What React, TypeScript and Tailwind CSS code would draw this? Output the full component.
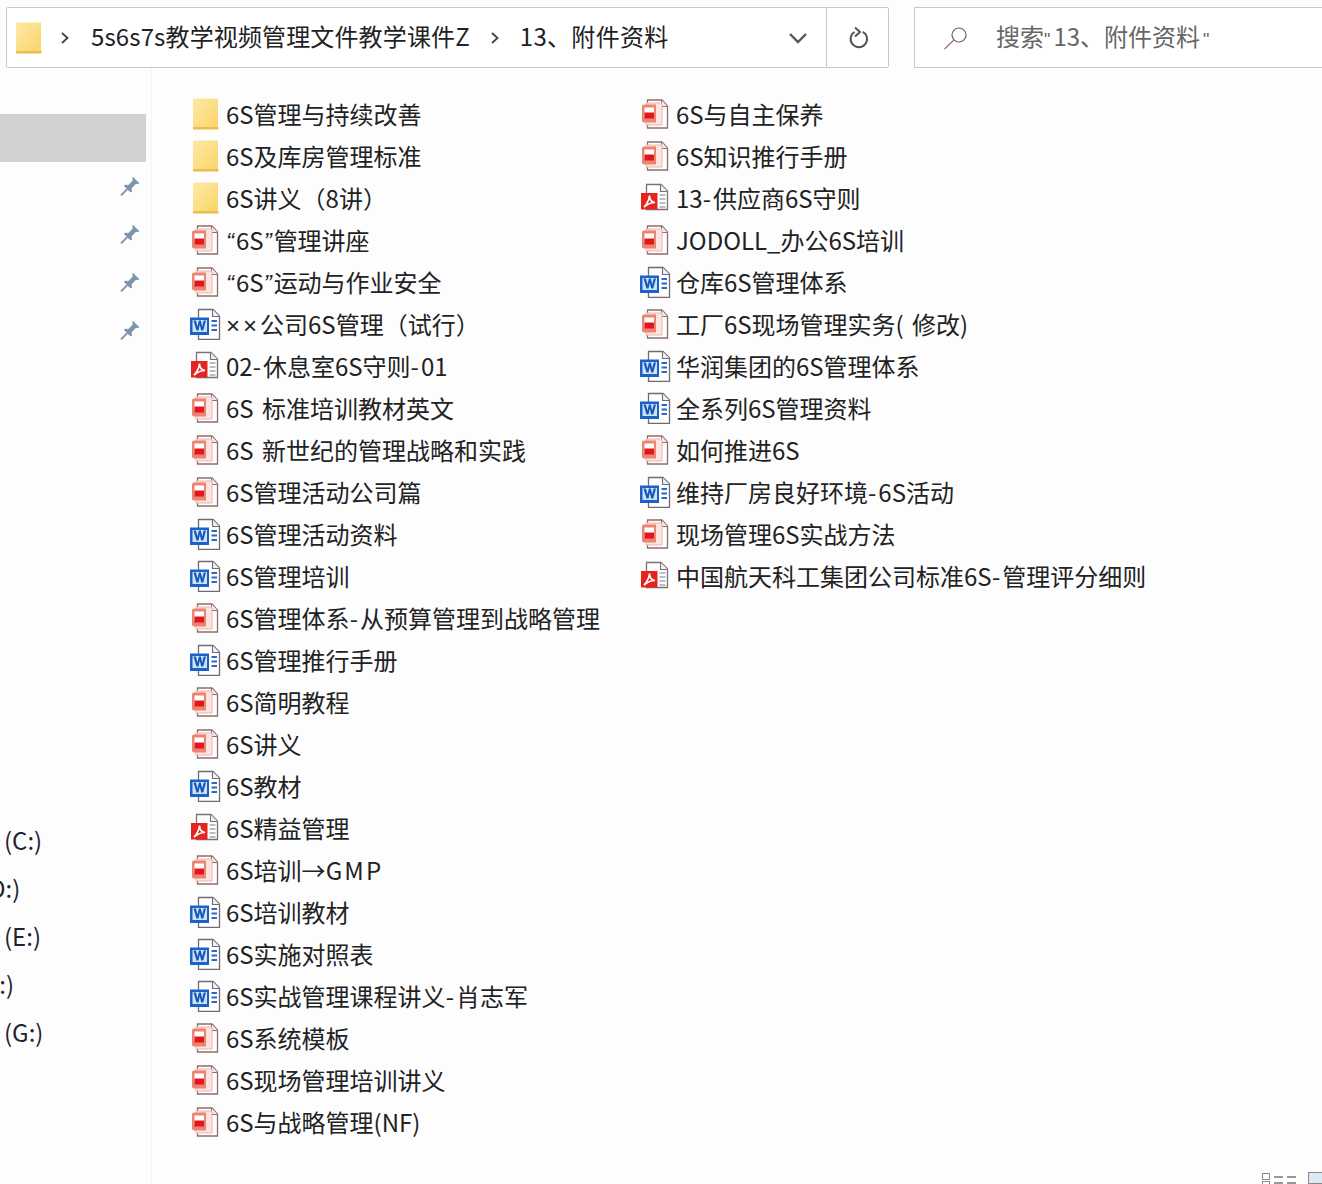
import * as React from "react";

type Kind = "folder" | "ppt" | "word" | "pdf";

const FONT = { fontFamily: '"Noto Sans CJK SC", "Noto Sans", sans-serif' };

const COL_1: [Kind, string][] = [
  ["folder", "6S管理与持续改善"],
  ["folder", "6S及库房管理标准"],
  ["folder", "6S讲义（8讲）"],
  ["ppt", "“6S”管理讲座"],
  ["ppt", "“6S”运动与作业安全"],
  ["word", "××公司6S管理（试行）"],
  ["pdf", "02-休息室6S守则-01"],
  ["ppt", "6S 标准培训教材英文"],
  ["ppt", "6S 新世纪的管理战略和实践"],
  ["ppt", "6S管理活动公司篇"],
  ["word", "6S管理活动资料"],
  ["word", "6S管理培训"],
  ["ppt", "6S管理体系-从预算管理到战略管理"],
  ["word", "6S管理推行手册"],
  ["ppt", "6S简明教程"],
  ["ppt", "6S讲义"],
  ["word", "6S教材"],
  ["pdf", "6S精益管理"],
  ["ppt", "6S培训→GMP"],
  ["word", "6S培训教材"],
  ["word", "6S实施对照表"],
  ["word", "6S实战管理课程讲义-肖志军"],
  ["ppt", "6S系统模板"],
  ["ppt", "6S现场管理培训讲义"],
  ["ppt", "6S与战略管理(NF)"],
];

const COL_2: [Kind, string][] = [
  ["ppt", "6S与自主保养"],
  ["ppt", "6S知识推行手册"],
  ["pdf", "13-供应商6S守则"],
  ["ppt", "JODOLL_办公6S培训"],
  ["word", "仓库6S管理体系"],
  ["ppt", "工厂6S现场管理实务( 修改)"],
  ["word", "华润集团的6S管理体系"],
  ["word", "全系列6S管理资料"],
  ["ppt", "如何推进6S"],
  ["word", "维持厂房良好环境-6S活动"],
  ["ppt", "现场管理6S实战方法"],
  ["pdf", "中国航天科工集团公司标准6S-管理评分细则"],
];

// Estos signos van más estrechos o más anchos que en la fuente CJK.
function renderName(name: string) {
  return name.split(/([“”×\-]|GMP)/).map((part, i) => {
    if (part === "“" || part === "”") {
      return (
        <span key={i} className="mr-[2px] font-['Liberation_Sans'] italic leading-[0]">
          {part}
        </span>
      );
    }
    if (part === "×") {
      return (
        <span key={i} className="mr-[3px] font-['Liberation_Sans'] leading-[0]">
          {part}
        </span>
      );
    }
    if (part === "-") {
      return (
        <span key={i} className="mr-[2px]">
          {part}
        </span>
      );
    }
    if (part === "GMP") {
      return (
        <span key={i} className="tracking-[2.2px]">
          {part}
        </span>
      );
    }
    return part;
  });
}

function FolderIcon() {
  return (
    <svg viewBox="0 0 26 32" className="h-8 w-[26px]">
      <defs>
        <linearGradient id="fold" x1="0" y1="0" x2="1" y2="1">
          <stop offset="0" stopColor="#fde9a6" />
          <stop offset="1" stopColor="#fbd468" />
        </linearGradient>
      </defs>
      <path d="M0 0.5H25V30.5H0Z" fill="url(#fold)" />
      <path d="M0 29H25.5V31.5H0Z" fill="#e9bd4e" />
    </svg>
  );
}

function PptIcon() {
  return (
    <svg viewBox="0 0 32 32" className="h-8 w-8">
      <path d="M8.5 2H23L28.5 8V30H8.5Z" fill="#fff" stroke="#8c6e6e" strokeWidth="1.3" />
      <path d="M22.5 2V8.5H28.5" fill="#f4ecec" stroke="#8c6e6e" strokeWidth="1.1" />
      <path d="M7 5H23V27H7Z" fill="#fbe3e0" stroke="#eeb3aa" strokeWidth="1" />
      <path d="M3 8.5Q3 6.5 5 6.5H17V24.5H5Q3 24.5 3 22.5Z" fill="#ec8472" />
      <path d="M5.5 9.5H15V19H5.5Z" fill="#fff" />
      <path d="M5.5 14.5H15V20.5H5.5Z" fill="#e2141c" />
    </svg>
  );
}

function WordIcon() {
  return (
    <svg viewBox="0 0 32 32" className="h-8 w-8">
      <path d="M9.5 1.5H24L30.5 8V31.5H9.5Z" fill="#fff" stroke="#6f6a78" strokeWidth="1.3" />
      <path d="M23.5 1.5V8.5H30.5" fill="#f1f1f4" stroke="#6f6a78" strokeWidth="1.1" />
      <path d="M22.5 13H28M22.5 17.5H28M22.5 22H28" stroke="#2a68c4" strokeWidth="1.8" />
      <path d="M1 9.5H20V27H1Z" fill="#1b62c8" />
      <path d="M3.5 12H18V24H3.5Z" fill="#cfe2f8" />
      <path d="M4.5 12.5L7.5 22.5H9.5L10.8 16.5L12.2 22.5H14.2L17 12.5H14.7L13.2 18.5L11.8 12.5H9.9L8.5 18.5L6.9 12.5Z" fill="#1557b8" />
    </svg>
  );
}

function PdfIcon() {
  return (
    <svg viewBox="0 0 32 32" className="h-8 w-8">
      <path d="M7.5 2.5H22L28.5 9V27.5H7.5Z" fill="#fff" stroke="#7d6f72" strokeWidth="1.3" />
      <path d="M21.5 2.5V9.5H28.5" fill="#f1f1f4" stroke="#7d6f72" strokeWidth="1.1" />
      <path d="M20.5 13H26.5M20.5 17H26.5M20.5 21H26.5M20.5 25H26.5" stroke="#a8a8ae" strokeWidth="1.4" />
      <path d="M2 11H18.5V27.5H2Z" fill="#e5231f" />
      <path d="M5 25C8 22 10 18 10.5 13.5C10.5 17 12.5 20 16 20.5C12.5 20.5 8.5 22 5 25Z" fill="none" stroke="#fff" strokeWidth="1.7" />
    </svg>
  );
}

function PinIcon() {
  return (
    <svg viewBox="0 0 20 20" className="h-[22px] w-[22px]">
      <path d="M12.5 1.5L18.5 7.5L17 8.5L15.5 8L11.5 12L11.8 15L10.5 16L4.5 10L5.5 8.8L8.5 9L12.5 5L12 3Z" fill="#7f93ab" />
      <path d="M7.5 12.8L1.8 18.5" stroke="#7f93ab" strokeWidth="1.8" />
    </svg>
  );
}

function Chevron() {
  return (
    <svg viewBox="0 0 10 14" className="h-[14px] w-[10px]">
      <path d="M2 2L7.5 7L2 12" fill="none" stroke="#444" strokeWidth="1.8" />
    </svg>
  );
}

function ViewListIcon() {
  return (
    <svg viewBox="0 0 34 12" className="h-3 w-[34px]">
      <rect x="0.5" y="1.5" width="7" height="6" fill="#fff" stroke="#8a8a8a" />
      <rect x="0.5" y="9.5" width="7" height="6" fill="#fff" stroke="#8a8a8a" />
      <path d="M12 5H21M25 5H34M12 11H21M25 11H34" stroke="#777" strokeWidth="1.6" />
    </svg>
  );
}

function FileIcon({ kind }: { kind: Kind }) {
  if (kind === "folder") {
    return (
      <span className="ml-[4px] flex">
        <FolderIcon />
      </span>
    );
  }
  if (kind === "ppt") return <PptIcon />;
  if (kind === "word") return <WordIcon />;
  return <PdfIcon />;
}

function FileRow({ kind, name }: { kind: Kind; name: string }) {
  return (
    <div className="flex h-[42px] items-center">
      <span className="flex w-[37px] shrink-0 items-center">
        <FileIcon kind={kind} />
      </span>
      <span className="whitespace-nowrap text-[24px] leading-none text-[#222] [word-spacing:3px]">{renderName(name)}</span>
    </div>
  );
}

export default function App() {
  return (
    <div className="flex h-[1184px] w-[1322px] flex-col overflow-hidden bg-[#fdfdfe]" style={FONT}>
      {/* barra de direcciones */}
      <div className="flex items-start pt-[7px]">
        <div className="ml-[6px] flex h-[61px] w-[883px] items-center rounded-[2px] border border-[#c9c9c9] bg-white">
          <span className="ml-[9px] flex">
            <FolderIcon />
          </span>
          <span className="ml-[18px] flex">
            <Chevron />
          </span>
          <span className="mb-[3px] ml-[21px] whitespace-nowrap text-[24px] tracking-[0.14px] text-[#222]">5s6s7s教学视频管理文件教学课件Z</span>
          <span className="ml-[20px] flex">
            <Chevron />
          </span>
          <span className="mb-[3px] ml-[20px] whitespace-nowrap text-[24px] tracking-[0.3px] text-[#222]">13、附件资料</span>
          <span className="ml-auto flex h-full items-center">
            <svg viewBox="0 0 20 12" className="mr-[18px] h-3 w-5">
              <path d="M2 2L10 10L18 2" fill="none" stroke="#555" strokeWidth="2.4" />
            </svg>
            <span className="flex h-full w-[62px] items-center justify-center border-l border-[#c9c9c9] pl-[3px]">
              <svg viewBox="0 0 24 24" className="h-6 w-6">
                <path d="M15.8 5.8A8.2 8.2 0 1 1 7.5 6" fill="none" stroke="#555" strokeWidth="2" />
                <path d="M8 1.5L13 6L8 10.5" fill="none" stroke="#555" strokeWidth="2" />
              </svg>
            </span>
          </span>
        </div>
        <div className="ml-[25px] flex h-[61px] flex-1 items-center border border-r-0 border-[#c9c9c9] bg-white">
          <svg viewBox="0 0 26 24" className="ml-[28px] h-6 w-[26px]">
            <circle cx="16" cy="9" r="7" fill="none" stroke="#666" strokeWidth="1.2" />
            <path d="M11 14L1.5 23" stroke="#a06a6a" strokeWidth="1.2" />
          </svg>
          <span className="mb-[3px] ml-[27px] whitespace-nowrap text-[24px] text-[#666]">
            搜索<span className="mr-[3px] font-['Liberation_Sans'] text-[18px] leading-[0]">"</span>13、附件资料<span className="ml-[3px] font-['Liberation_Sans'] text-[18px] leading-[0]">"</span>
          </span>
        </div>
      </div>

      <div className="flex min-h-0 flex-1">
        {/* panel de navegación */}
        <div className="flex w-[152px] shrink-0 flex-col overflow-hidden border-r border-[#f4f4f6]">
          <div className="mt-[46px] mr-[5px] h-[48px] shrink-0 bg-[#d1d1d1]" />
          <div className="flex flex-col items-end pr-[10px]">
            {[0, 1, 2, 3].map((i) => (
              <span key={i} className="flex h-12 items-center">
                <PinIcon />
              </span>
            ))}
          </div>
          <div className="mt-[462px] flex flex-col text-[24px] leading-[48px] text-[#223]">
            <span className="pl-[4px]">(C:)</span>
            <span className="-ml-[11px]">D:)</span>
            <span className="pl-[4px]">(E:)</span>
            <span className="-ml-[14px]">F:)</span>
            <span className="pl-[4px]">(G:)</span>
          </div>
        </div>

        {/* lista de archivos */}
        <div className="flex min-w-0 flex-1 flex-col">
          <div className="flex flex-1 items-start pt-[25px] pl-[37px]">
            <div className="flex w-[450px] shrink-0 flex-col">
              {COL_1.map(([kind, name]) => (
                <FileRow key={name} kind={kind} name={name} />
              ))}
            </div>
            <div className="flex flex-col">
              {COL_2.map(([kind, name]) => (
                <FileRow key={name} kind={kind} name={name} />
              ))}
            </div>
          </div>
          <div className="flex h-3 items-start justify-end overflow-hidden">
            <ViewListIcon />
            <span className="ml-[12px] h-3 w-[14px] border border-r-0 border-[#8a8a8a] bg-[#dce9f5]" />
          </div>
        </div>
      </div>
    </div>
  );
}
